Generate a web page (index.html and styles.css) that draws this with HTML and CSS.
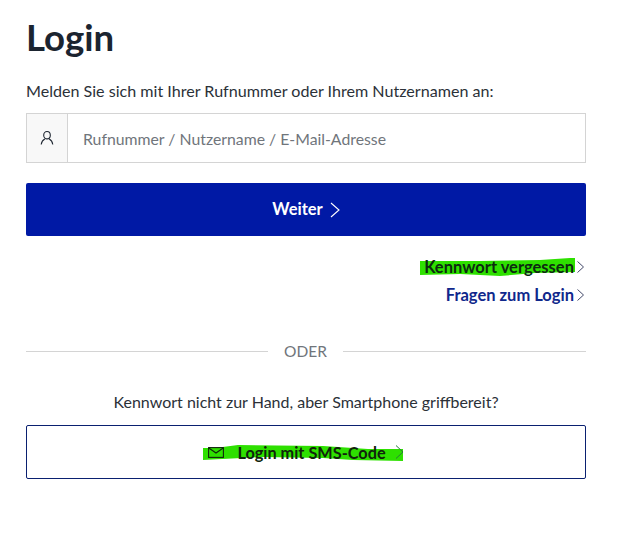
FILE: index.html
```html
<!doctype html>
<html>

<head>
    <link rel="stylesheet" href="styles.css">
</head>

<body>
    <div class="login">
        <h1 class="title">Login</h1>
        <p class="intro">Melden Sie sich mit Ihrer Rufnummer oder Ihrem Nutzernamen an:</p>

        <div class="field">
            <span class="field-icon">
                <svg width="16" height="16" viewBox="0 0 16 16" fill="none" stroke="#1d2530" stroke-width="1.1">
                    <ellipse cx="8" cy="5.2" rx="3.3" ry="3.7" />
                    <path d="M2.2 14.5c.4-3 2.4-5 3.6-5.6M13.8 14.5c-.4-3-2.4-5-3.6-5.6" />
                </svg>
            </span>
            <span class="field-text">Rufnummer / Nutzername / E-Mail-Adresse</span>
        </div>

        <a class="btn-primary"><span class="btn-label">Weiter</span>
            <svg class="chev" width="10" height="16" viewBox="0 0 10 16" fill="none" stroke="#fff" stroke-width="1.1">
                <path d="M1 1l8 7-8 7" />
            </svg>
        </a>

        <div class="links">
            <a class="link">
                <span class="link-text dark">
                    <svg class="mark" width="155" height="18" viewBox="0 0 155 18">
                        <path fill="#2ee000" d="M0 3l60 0 60-1 30-2 5 0 0 14-40 1-35 3-40-2-40 1z" />
                    </svg>
                    <span class="link-label">Kennwort vergessen</span>
                </span>
                <svg class="chev" width="7" height="12" viewBox="0 0 7 12" fill="none" stroke="#444a6a" stroke-width="1">
                    <path d="M.5 .5l6 5.5-6 5.5" />
                </svg>
            </a>
            <a class="link">
                <span class="link-text">Fragen zum Login</span>
                <svg class="chev" width="7" height="12" viewBox="0 0 7 12" fill="none" stroke="#444a6a" stroke-width="1">
                    <path d="M.5 .5l6 5.5-6 5.5" />
                </svg>
            </a>
        </div>

        <div class="divider"><span>ODER</span></div>

        <p class="hint">Kennwort nicht zur Hand, aber Smartphone griffbereit?</p>

        <a class="btn-outline">
            <span class="sms-group">
                <svg class="mark" width="200" height="16" viewBox="0 0 200 16">
                    <path fill="#2ee000" d="M0 3l12 0 23-3 85 1 45 3 35 0 0 12-50-1-30-2-60-1-60 3z" />
                </svg>
                <svg class="mail" width="16" height="11" viewBox="0 0 16 11" fill="none" stroke="#10240c" stroke-width="1.1">
                    <rect x=".6" y=".6" width="14.8" height="9.8" />
                    <path d="M.8 1l7.2 5 7.2-5" />
                </svg>
                <span class="sms-text">Login mit SMS-Code</span>
                <svg class="chev" width="9" height="14" viewBox="0 0 9 14" fill="none" stroke="#2a7a3a" stroke-width="1">
                    <path d="M1 .5l7 6.5-7 6.5" />
                </svg>
            </span>
        </a>
    </div>
</body>

</html>
```

FILE: styles.css
```css
html,
body {
    overflow: hidden;
    width: 100%;
    height: 100%;
    margin: 0;
    background-color: #fff;
}

body {
    font-family: Lato, "Noto Sans", sans-serif;
    color: #2b3138;
}

.login {
    width: 560px;
    margin-left: 26px;
    padding-top: 16px;
}

.title {
    margin: 0;
    font-size: 36.6px;
    line-height: 42px;
    font-weight: 700;
    color: #1b2430;
}

.intro {
    margin: 23px 0 0;
    font-size: 16.1px;
    line-height: 20px;
}

.field {
    display: flex;
    height: 48px;
    margin-top: 12px;
    border: 1px solid #d4d4d4;
}

.field-icon {
    display: flex;
    align-items: center;
    justify-content: center;
    width: 40px;
    background-color: #f8f8f8;
    border-right: 1px solid #d4d4d4;
}

.field-text {
    align-self: center;
    margin-left: 15px;
    font-size: 15.8px;
    color: #70757b;
}

.btn-primary {
    display: flex;
    align-items: center;
    justify-content: center;
    gap: 7px;
    height: 53px;
    margin-top: 20px;
    border-radius: 2px;
    background-color: #0019a5;
    color: #fff;
    font-size: 16.5px;
    font-weight: 700;
}

.btn-label {
    padding-bottom: 2px;
}

.links {
    display: flex;
    flex-direction: column;
    align-items: flex-end;
    gap: 9px;
    margin-top: 21px;
    padding-right: 2px;
}

.link {
    display: flex;
    align-items: center;
    gap: 3px;
    height: 19px;
    font-size: 16.5px;
    font-weight: 700;
    color: #10288c;
}

.link-text {
    position: relative;
}

.link-text.dark {
    color: #0c2a10;
}

.link-label {
    position: relative;
}

.mark {
    position: absolute;
}

.link-text .mark {
    top: 1px;
    left: -4px;
}

.divider {
    display: flex;
    align-items: center;
    gap: 16px;
    margin-top: 38px;
    font-size: 15.5px;
    color: #70757b;
}

.divider::before,
.divider::after {
    content: "";
    flex: 1;
    border-top: 1px solid #d4d4d4;
}

.divider::before {
    flex: 0 0 242px;
}

.hint {
    margin: 32px 0 0;
    text-align: center;
    font-size: 16px;
    line-height: 20px;
}

.btn-outline {
    display: flex;
    align-items: center;
    justify-content: center;
    height: 52px;
    margin-top: 13px;
    border: 1px solid #0a2070;
    border-radius: 2px;
    font-size: 16.3px;
    font-weight: 700;
    color: #10240c;
}

.sms-group {
    position: relative;
    display: flex;
    align-items: center;
}

.sms-group .mark {
    top: 2px;
    left: -5px;
}

.mail {
    position: relative;
    margin-right: 13px;
}

.sms-text {
    position: relative;
}

.sms-group .chev {
    margin-left: 9px;
}

.chev {
    position: relative;
    flex: none;
}
```
